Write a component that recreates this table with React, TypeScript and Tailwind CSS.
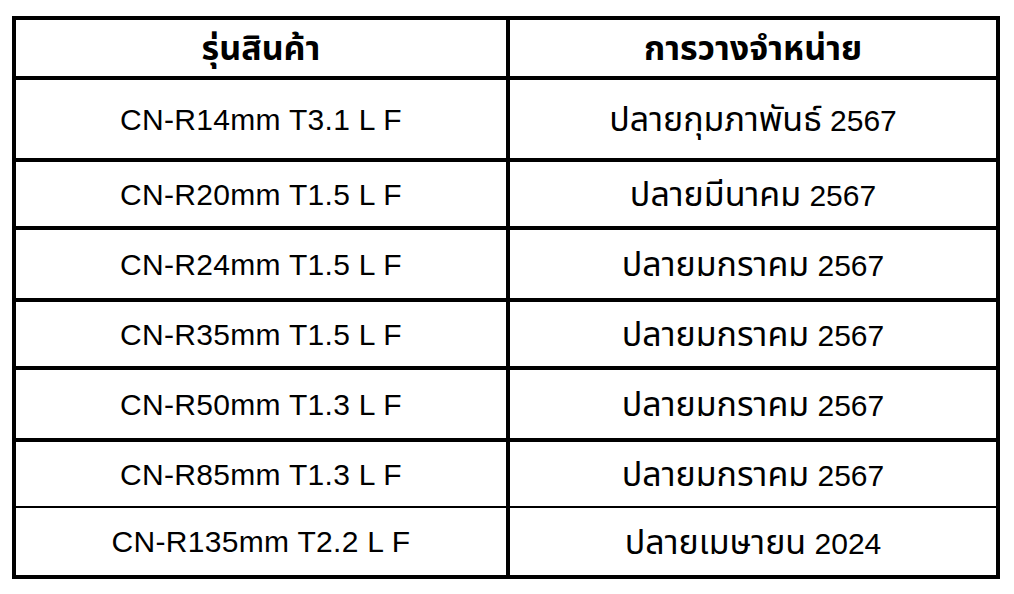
const ROWS = [
  { model: 'CN-R14mm T3.1 L F', month: 'ปลายกุมภาพันธ์', year: '2567', h: 'h-[78px]', line: 'border-t-4' },
  { model: 'CN-R20mm T1.5 L F', month: 'ปลายมีนาคม', year: '2567', h: 'h-[64px]', line: 'border-t-4' },
  { model: 'CN-R24mm T1.5 L F', month: 'ปลายมกราคม', year: '2567', h: 'h-[68px]', line: 'border-t-4' },
  { model: 'CN-R35mm T1.5 L F', month: 'ปลายมกราคม', year: '2567', h: 'h-[64px]', line: 'border-t-4' },
  { model: 'CN-R50mm T1.3 L F', month: 'ปลายมกราคม', year: '2567', h: 'h-[68px]', line: 'border-t-4' },
  { model: 'CN-R85mm T1.3 L F', month: 'ปลายมกราคม', year: '2567', h: 'h-[64px]', line: 'border-t-4' },
  { model: 'CN-R135mm T2.2 L F', month: 'ปลายเมษายน', year: '2024', h: 'h-[67px]', line: 'border-t-2' },
];

export default function App() {
  return (
    <div className="w-[1014px] h-[594px] bg-white pt-4 pl-3 font-['Liberation_Sans','Noto_Sans','Noto_Sans_Thai',sans-serif] text-black">
      <div className="w-[988px] border-4 border-black">
        {/* Header */}
        <div className="flex h-[56px]">
          <div className="w-[490px] h-full flex items-center justify-center text-[34px] font-bold leading-none">รุ่นสินค้า</div>
          <div className="w-1 h-full bg-black" />
          <div className="flex-1 h-full flex items-center justify-center text-[34px] font-bold leading-none">การวางจำหน่าย</div>
        </div>

        {ROWS.map((r) => (
          <div key={r.model} className={`flex ${r.h} ${r.line} border-black box-content`}>
            <div className="w-[490px] h-full flex items-center justify-center text-[30px] tracking-[0.3px]">{r.model}</div>
            <div className="w-1 h-full bg-black" />
            <div className="flex-1 h-full flex items-center justify-center">
              <span className="text-[30px] leading-none">
                <span className="text-[34px]">{r.month}</span> {r.year}
              </span>
            </div>
          </div>
        ))}
      </div>
    </div>
  );
}
